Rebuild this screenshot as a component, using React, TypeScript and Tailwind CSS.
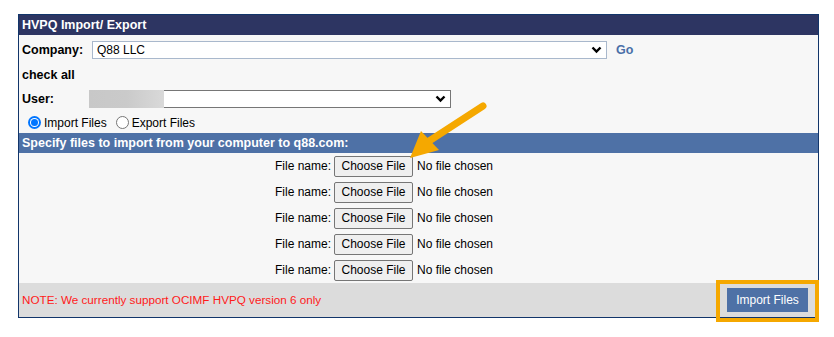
const fileRows = [1, 2, 3, 4, 5];

function Chevron() {
  return (
    <svg width="11" height="8" viewBox="0 0 11 8" className="shrink-0">
      <path d="M1.5 1.5 L5.5 5.5 L9.5 1.5" fill="none" stroke="#000" strokeWidth="2.4" />
    </svg>
  );
}

function Radio({ checked }: { checked?: boolean }) {
  if (checked) {
    return (
      <span className="flex h-[13px] w-[13px] shrink-0 items-center justify-center rounded-full bg-[#0075ff]">
        <span className="flex h-[9px] w-[9px] items-center justify-center rounded-full bg-white">
          <span className="h-[7px] w-[7px] rounded-full bg-[#0075ff]" />
        </span>
      </span>
    );
  }
  return <span className="block h-[13px] w-[13px] shrink-0 rounded-full border border-[#767676] bg-white" />;
}

export default function App() {
  return (
    <div className="relative h-[337px] w-[834px] bg-white font-['Liberation_Sans',Arial,sans-serif] text-[12px] text-black">
      <div className="absolute left-[18px] top-[14px] w-[801px] border border-[#12356a]">
        <div className="flex h-[20px] items-center bg-[#2d3562] pl-[3px] text-[12.5px] font-bold text-white">
          HVPQ Import/ Export
        </div>

        <div className="bg-[#f7f7f7] pl-[3px]">
          <div className="flex h-[30px] items-center">
            <span className="w-[70px] text-[12.5px] font-bold">Company:</span>
            <div className="flex h-[18px] w-[515px] items-center justify-between border border-[#a9b8cc] bg-white pl-[4px] pr-[4px]">
              <span>Q88 LLC</span>
              <Chevron />
            </div>
            <span className="ml-[9px] text-[12.5px] font-bold text-[#4a6fa8]">Go</span>
          </div>
          <div className="flex h-[21px] items-center text-[12.5px] font-bold">check all</div>
          <div className="flex h-[26px] items-center">
            <span className="w-[67px] text-[12.5px] font-bold">User:</span>
            <div className="flex h-[18px] w-[362px] items-center justify-between border border-[#767676] bg-white pr-[4px]">
              <span className="-ml-px h-[18px] w-[75px] bg-gradient-to-r from-[#c8c8c8] via-[#cacaca] to-[#d9d9d9]" />
              <Chevron />
            </div>
          </div>
          <div className="flex h-[21px] items-center pl-[6px]">
            <Radio checked />
            <span className="ml-[3px]">Import Files</span>
            <span className="ml-[9px]">
              <Radio />
            </span>
            <span className="ml-[3px]">Export Files</span>
          </div>
        </div>

        <div className="flex h-[20px] items-center bg-[#4e71a6] pl-[3px] text-[12.5px] font-bold text-white">
          Specify files to import from your computer to q88.com:
        </div>

        <div className="bg-[#f7f7f7]">
          {fileRows.map((r) => (
            <div key={r} className="flex h-[26px] items-center">
              <span className="w-[315px] pr-[3px] text-right">File name:</span>
              <span className="flex h-[21px] w-[79px] items-center justify-center rounded-[2px] border border-[#767676] bg-[#efefef]">
                Choose File
              </span>
              <span className="ml-[4px]">No file chosen</span>
            </div>
          ))}
        </div>

        <div className="flex h-[34px] items-center justify-between bg-[#dcdcdc] pl-[3px] pr-[10px]">
          <span className="text-[11.7px] text-[#ff1a1a]">NOTE: We currently support OCIMF HVPQ version 6 only</span>
          <span className="flex h-[24px] w-[81px] items-center justify-center bg-[#4e71a6] text-white">
            Import Files
          </span>
        </div>
      </div>

      <div className="absolute left-[716px] top-[280px] h-[42px] w-[103px] border-[4px] border-[#f5a800]" />

      <svg className="absolute left-0 top-0" width="834" height="337">
        <line x1="483" y1="106" x2="426" y2="143" stroke="#f5a800" strokeWidth="7" strokeLinecap="round" />
        <polygon points="410,158 421,131 439,150" fill="#f5a800" />
      </svg>
    </div>
  );
}
